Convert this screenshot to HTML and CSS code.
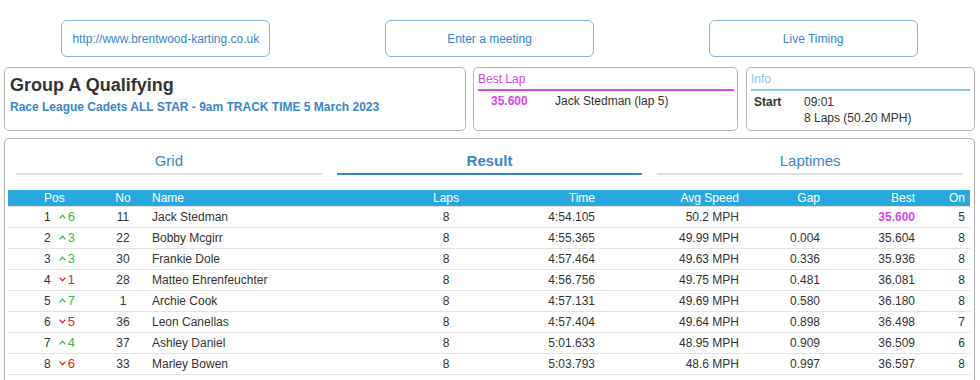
FILE: index.html
```html
<!DOCTYPE html>
<html lang="en">
<head>
    <meta charset="utf-8">
    <link rel="stylesheet" href="styles.css">
</head>
<body>
    <!--Top links-->
    <div class="links">
        <div class="link-cell"><a class="link-btn">http://www.brentwood-karting.co.uk</a></div>
        <div class="link-cell"><a class="link-btn">Enter a meeting</a></div>
        <div class="link-cell"><a class="link-btn">Live Timing</a></div>
    </div>

    <!--Session header-->
    <div class="session">
        <div class="box title-box">
            <h1>Group A Qualifying</h1>
            <div class="subtitle">Race League Cadets ALL STAR - 9am TRACK TIME 5 March 2023</div>
        </div>
        <div class="box best-box">
            <div class="box-head best-head">Best Lap</div>
            <div class="kv">
                <span class="best-val">35.600</span>
                <span>Jack Stedman (lap 5)</span>
            </div>
        </div>
        <div class="box info-box">
            <div class="box-head info-head">Info</div>
            <div class="kv">
                <span class="info-key">Start</span>
                <span>09:01</span>
            </div>
            <div class="kv">
                <span class="info-key"></span>
                <span>8 Laps (50.20 MPH)</span>
            </div>
        </div>
    </div>

    <!--Results-->
    <div class="box results">
        <div class="tabs">
            <a class="tab">Grid</a>
            <a class="tab active">Result</a>
            <a class="tab">Laptimes</a>
        </div>
        <table class="list">
            <colgroup>
                <col class="c-pos"><col class="c-no"><col class="c-name"><col class="c-laps">
                <col class="c-time"><col class="c-speed"><col class="c-gap"><col class="c-best"><col class="c-on">
            </colgroup>
            <thead>
                <tr>
                    <th class="pos">Pos</th>
                    <th class="mid">No</th>
                    <th class="name">Name</th>
                    <th class="mid">Laps</th>
                    <th class="num">Time</th>
                    <th class="num">Avg Speed</th>
                    <th class="num">Gap</th>
                    <th class="num">Best</th>
                    <th class="num">On</th>
                </tr>
            </thead>
            <tbody id="rows">
            </tbody>
        </table>
    </div>

<script>
var results = [
    [1, 6, 11, "Jack Stedman", 8, "4:54.105", "50.2 MPH", "", "35.600", 5],
    [2, 3, 22, "Bobby Mcgirr", 8, "4:55.365", "49.99 MPH", "0.004", "35.604", 8],
    [3, 3, 30, "Frankie Dole", 8, "4:57.464", "49.63 MPH", "0.336", "35.936", 8],
    [4, -1, 28, "Matteo Ehrenfeuchter", 8, "4:56.756", "49.75 MPH", "0.481", "36.081", 8],
    [5, 7, 1, "Archie Cook", 8, "4:57.131", "49.69 MPH", "0.580", "36.180", 8],
    [6, -5, 36, "Leon Canellas", 8, "4:57.404", "49.64 MPH", "0.898", "36.498", 7],
    [7, 4, 37, "Ashley Daniel", 8, "5:01.633", "48.95 MPH", "0.909", "36.509", 6],
    [8, -6, 33, "Marley Bowen", 8, "5:03.793", "48.6 MPH", "0.997", "36.597", 8],
    [9, 1, 4, "Michael Swift", 7, "5:06.330", "48.53 MPH", "1.040", "36.640", 7]
];

var up = '<svg class="caret" width="7" height="5" viewBox="0 0 7 5"><polyline points="0.6,4.4 3.5,1.2 6.4,4.4" fill="none" stroke="currentColor" stroke-width="1.3"/></svg>';
var down = '<svg class="caret" width="7" height="5" viewBox="0 0 7 5"><polyline points="0.6,0.6 3.5,3.8 6.4,0.6" fill="none" stroke="currentColor" stroke-width="1.3"/></svg>';

// Build result rows
var tbody = document.getElementById("rows");
results.forEach(function (r) {
    var tr = tbody.insertRow();
    var trend = r[1] > 0
        ? '<span class="trend up">' + up + r[1] + '</span>'
        : '<span class="trend down">' + down + (-r[1]) + '</span>';
    var best = r[0] == 1 ? '<span class="fastest">' + r[8] + '</span>' : r[8];
    tr.innerHTML =
        '<td class="pos">' + r[0] + trend + '</td>' +
        '<td class="mid">' + r[2] + '</td>' +
        '<td class="name">' + r[3] + '</td>' +
        '<td class="mid">' + r[4] + '</td>' +
        '<td class="num">' + r[5] + '</td>' +
        '<td class="num">' + r[6] + '</td>' +
        '<td class="num">' + r[7] + '</td>' +
        '<td class="num">' + best + '</td>' +
        '<td class="num">' + r[9] + '</td>';
});
</script>
</body>
</html>
```

FILE: styles.css
```css
body {
    margin: 0 5px 0 4px;
    font-family: "Liberation Sans", Arial, sans-serif;
    font-size: 12px;
    color: #333;
    background: #fff;
}

a {
    cursor: pointer;
}

/* top links */
.links {
    display: grid;
    grid-template-columns: 1fr 1fr 1fr;
    padding-top: 20px;
}
.link-cell {
    display: flex;
    justify-content: center;
}
.link-btn {
    display: flex;
    align-items: center;
    justify-content: center;
    width: 207px;
    height: 35px;
    border: 1px solid #86b5e3;
    border-radius: 6px;
    color: #3a86c8;
}

/* boxes */
.box {
    border: 1px solid #b3b3b3;
    border-radius: 5px;
    box-sizing: border-box;
}
.session {
    display: flex;
    margin-top: 10px;
    height: 64px;
}
.title-box {
    width: 462px;
    padding: 6px 5px 0;
}
.title-box h1 {
    margin: 0;
    font-size: 18px;
    line-height: 22px;
    color: #333;
}
.subtitle {
    margin-top: 3px;
    font-weight: bold;
    line-height: 16px;
    color: #3a86c8;
}
.best-box {
    width: 265px;
    margin-left: 7px;
    padding: 4px 3px 0 4px;
}
.info-box {
    width: 229px;
    margin-left: 8px;
    padding: 4px 4px 0 4px;
}
.box-head {
    line-height: 14px;
    padding-bottom: 3px;
    border-bottom: 2px solid;
}
.best-head {
    color: #dd44f2;
    border-color: #dd44f2;
}
.info-head {
    color: #8fc3f2;
    border-color: #8fc3f2;
}
.kv {
    display: flex;
    line-height: 16px;
}
.best-box .kv {
    margin-top: 2px;
}
.info-box .box-head + .kv {
    margin-top: 3px;
}
.best-val {
    width: 64px;
    padding-left: 13px;
    font-weight: bold;
    color: #dd44f2;
}
.info-key {
    width: 50px;
    padding-left: 3px;
    font-weight: bold;
}

/* results */
.results {
    margin-top: 7px;
    height: 300px;
    overflow: hidden;
}
.tabs {
    display: flex;
    gap: 15px;
    padding: 0 11px;
}
.tab {
    flex: 1;
    text-align: center;
    font-size: 15px;
    line-height: 18px;
    padding: 13px 0 3px;
    color: #3a86c8;
    border-bottom: 2px solid #dedede;
}
.tab.active {
    font-weight: bold;
    border-color: #3a86c8;
}

table.list {
    margin: 15px 4px 0 3px;
    width: 962px;
    table-layout: fixed;
    border-collapse: collapse;
}
.c-pos { width: 90px; }
.c-no { width: 50px; }
.c-name { width: 258px; }
.c-laps { width: 80px; }
.c-time { width: 114px; }
.c-speed { width: 144px; }
.c-gap { width: 81px; }
.c-best { width: 95px; }
.c-on { width: 50px; }

table.list th {
    background: #29a8e0;
    color: #fff;
    font-weight: normal;
    height: 16px;
    padding: 0 5px;
    line-height: 16px;
}
table.list td {
    height: 20px;
    padding: 0 5px;
    border-top: 1px solid #e3e3e3;
    line-height: 20px;
    white-space: nowrap;
}
table.list .pos {
    text-align: left;
    padding-left: 36px;
}
table.list .mid {
    text-align: center;
}
table.list .name {
    text-align: left;
    padding-left: 4px;
}
table.list .num {
    text-align: right;
}

.trend {
    margin-left: 8px;
    font-size: 13px;
}
.trend.up {
    color: #3cb54a;
}
.trend.down {
    color: #e8262c;
}
.caret {
    margin-right: 2px;
    vertical-align: 2px;
}
.fastest {
    color: #dd44f2;
    font-weight: bold;
}
```
